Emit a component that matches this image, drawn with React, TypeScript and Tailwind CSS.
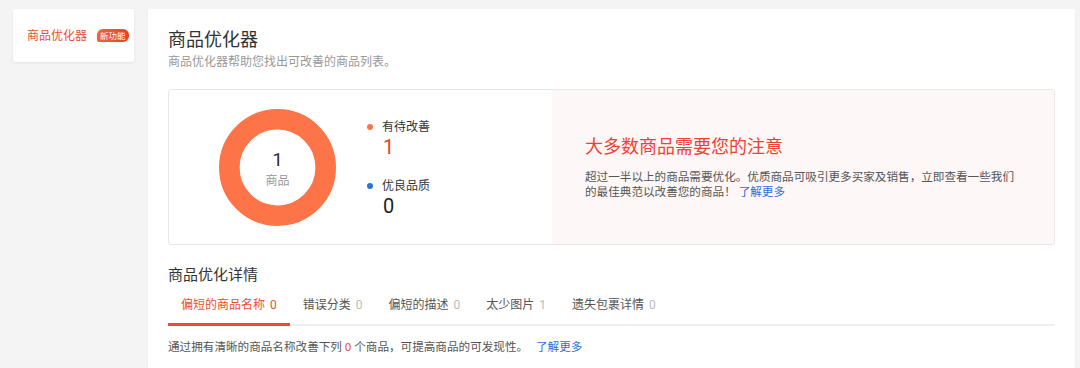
import React from 'react';

const FONT = 'font-["Roboto","Noto_Sans_CJK_SC",sans-serif]';

const tabs = [
  { label: '偏短的商品名称', count: 0, active: true },
  { label: '错误分类', count: 0 },
  { label: '偏短的描述', count: 0 },
  { label: '太少图片', count: 1 },
  { label: '遗失包裹详情', count: 0 },
];

const Donut: React.FC = () => (
  <div className="relative h-[117px] w-[117px] shrink-0">
    <svg width="117" height="117" viewBox="0 0 117 117">
      <circle cx="58.5" cy="58.5" r="48.2" fill="none" stroke="#fd7449" strokeWidth="20.6" />
    </svg>
    <div className="absolute inset-0 flex flex-col items-center justify-center pt-[3px]">
      <span className="text-[19px] leading-[22px] text-[#333]">1</span>
      <span className="mt-[2px] text-[12px] leading-[16px] text-[#999]">商品</span>
    </div>
  </div>
);

const LegendItem: React.FC<{ dot: string; label: string; value: number; valueColor: string }> = ({
  dot,
  label,
  value,
  valueColor,
}) => (
  <div>
    <div className="flex items-center">
      <span className={`h-[6px] w-[6px] rounded-full ${dot}`} />
      <span className="ml-[9px] text-[12px] leading-[16px] text-[#333]">{label}</span>
    </div>
    <div className={`ml-[16px] text-[20px] leading-[24px] ${valueColor}`}>{value}</div>
  </div>
);

export default function App() {
  return (
    <div className={`flex h-[368px] overflow-hidden bg-[#f4f4f4] pl-[13px] pt-[9px] ${FONT}`}>
      {/* Sidebar */}
      <div className="flex h-[53px] w-[121px] shrink-0 items-center rounded-[2px] bg-white pl-[14px] shadow-[0_1px_3px_rgba(0,0,0,0.08)]">
        <span className="text-[12px] leading-[16px] text-[#ee4d2d]">商品优化器</span>
        <span className="ml-[10px] flex h-[13px] items-center rounded-[6px] rounded-bl-[2px] bg-gradient-to-r from-[#f8603c] to-[#e8402a] px-[3px] text-[8.5px] leading-[10px] text-white">
          新功能
        </span>
      </div>

      {/* Main card */}
      <div className="ml-[14px] w-[927px] shrink-0 rounded-[2px] bg-white px-[20px] pt-[19px] shadow-[0_1px_3px_rgba(0,0,0,0.05)]">
        <h1 className="text-[18px] leading-[24px] text-[#333]">商品优化器</h1>
        <p className="mt-[2px] text-[12px] leading-[16px] text-[#999]">商品优化器帮助您找出可改善的商品列表。</p>

        {/* Summary box */}
        <div className="mt-[19px] flex h-[156px] overflow-hidden rounded-[3px] border border-[#e8e8e8]">
          <div className="flex w-[383px] items-center pl-[50px]">
            <Donut />
            <div className="ml-[31px] flex flex-col gap-[19px] pt-[2px]">
              <LegendItem dot="bg-[#fd7449]" label="有待改善" value={1} valueColor="text-[#ee3d2d]" />
              <LegendItem dot="bg-[#2673dd]" label="优良品质" value={0} valueColor="text-[#222]" />
            </div>
          </div>
          <div className="flex flex-1 flex-col justify-center bg-[#fdf7f7] pl-[33px]">
            <h2 className="text-[18px] leading-[24px] text-[#f23f35]">大多数商品需要您的注意</h2>
            <p className="mt-[11px] w-[436px] text-[11.6px] leading-[15px] text-[#555]">
              超过一半以上的商品需要优化。优质商品可吸引更多买家及销售，立即查看一些我们的最佳典范以改善您的商品！{' '}
              <a className="text-[#2673dd]">了解更多</a>
            </p>
          </div>
        </div>

        {/* Details */}
        <h3 className="mt-[20px] text-[15px] leading-[20px] text-[#333]">商品优化详情</h3>
        <div className="flex border-b-2 border-[#efefef]">
          {tabs.map((t) => (
            <div
              key={t.label}
              className={`-mb-[2px] flex items-center border-b-[3px] px-[13px] pb-[10px] pt-[12px] text-[12px] leading-[16px] ${
                t.active ? 'border-[#ee4d2d] text-[#ee4d2d]' : 'border-transparent text-[#555]'
              }`}
            >
              <span>{t.label}</span>
              <span className={`ml-[5px] ${t.active ? 'text-[#ee4d2d]' : 'text-[#bbb]'}`}>{t.count}</span>
            </div>
          ))}
        </div>
        <p className="mt-[13px] text-[11.6px] leading-[16px] text-[#555]">
          通过拥有清晰的商品名称改善下列 <span className="text-[#ee4d2d]">0</span> 个商品，可提高商品的可发现性。{' '}
          <a className="ml-[5px] text-[#2673dd]">了解更多</a>
        </p>
      </div>
    </div>
  );
}
